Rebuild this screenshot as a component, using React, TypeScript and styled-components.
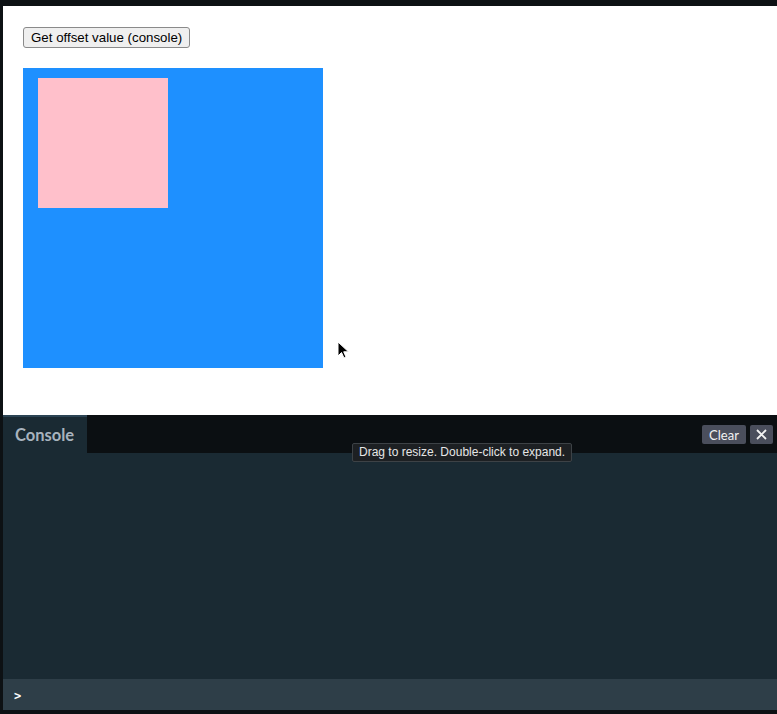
import React from "react";
import styled, { createGlobalStyle } from "styled-components";

const Global = createGlobalStyle`
  html, body { margin: 0; padding: 0; background: #0d1114; }
  body { width: 777px; height: 714px; overflow: hidden; }
`;

const Frame = styled.div`
  position: relative;
  width: 777px;
  height: 714px;
  box-sizing: border-box;
  padding: 6px 0 4px 3px;
  display: flex;
  flex-direction: column;
  background: #0d1114;
`;

const Preview = styled.div`
  height: 409px;
  flex: none;
  background: #ffffff;
  box-sizing: border-box;
  padding: 21px 20px 0 20px;
  display: flex;
  flex-direction: column;
  align-items: flex-start;
  gap: 20px;
`;

const NativeButton = styled.button`
  font-family: "Liberation Sans", Arial, sans-serif;
  font-size: 13.3px;
  height: 21px;
  padding: 1px 7px;
  border: 1px solid #8a8a8a;
  border-radius: 3px;
  background: #efefef;
  color: #000;
  line-height: 17px;
`;

const BlueBox = styled.div`
  width: 300px;
  height: 300px;
  background: #1e90ff;
  box-sizing: border-box;
  padding: 10px 0 0 15px;
`;

const PinkBox = styled.div`
  width: 130px;
  height: 130px;
  background: #ffc0cb;
`;

const Console = styled.div`
  flex: 1;
  display: flex;
  flex-direction: column;
  background: #1a2a33;
  position: relative;
`;

const Header = styled.div`
  height: 38px;
  flex: none;
  background: #0b0f12;
  display: flex;
  align-items: stretch;
`;

const Tab = styled.div`
  width: 84px;
  box-sizing: border-box;
  background: #1a2a33;
  border-top: 2px solid #2c4454;
  padding-left: 12px;
  display: flex;
  align-items: center;
  font-family: Lato, "Open Sans", sans-serif;
  font-weight: 700;
  font-size: 16.5px;
  color: #a8b3be;
`;

const Spacer = styled.div`
  flex: 1;
`;

const Actions = styled.div`
  display: flex;
  gap: 4px;
  padding: 10px 4px 0 0;
  align-items: flex-start;
`;

const HeadButton = styled.button<{ $square?: boolean }>`
  height: 19px;
  min-width: ${(p) => (p.$square ? "23px" : "44px")};
  padding: 0 ${(p) => (p.$square ? "0" : "6px")};
  border: none;
  border-radius: 2px;
  background: #4a4e5c;
  color: #f2f2f2;
  font-family: Lato, "Open Sans", sans-serif;
  font-size: 13px;
  display: flex;
  align-items: center;
  justify-content: center;
`;

const Body = styled.div`
  flex: 1;
  background: #1a2a33;
`;

const InputBar = styled.div`
  height: 31px;
  flex: none;
  background: #2e3e48;
  display: flex;
  align-items: center;
  padding-left: 11px;
  padding-top: 2px;
  box-sizing: border-box;
  font-family: "DejaVu Sans Mono", monospace;
  font-weight: 700;
  font-size: 12px;
  color: #ffffff;
`;

const Tooltip = styled.div`
  position: absolute;
  left: 349px;
  top: 28px;
  height: 19px;
  box-sizing: border-box;
  padding: 0 6px;
  background: #1d2023;
  border: 1px solid #3d4246;
  border-radius: 2px;
  color: #e6e6e6;
  font-family: "Liberation Sans", Arial, sans-serif;
  font-size: 12px;
  line-height: 17px;
  white-space: nowrap;
`;

const Cursor = styled.svg`
  position: absolute;
  left: 337px;
  top: 341px;
`;

export default function App() {
  return (
    <>
      <Global />
      <Frame>
        <Preview>
          <NativeButton>Get offset value (console)</NativeButton>
          <BlueBox>
            <PinkBox />
          </BlueBox>
        </Preview>
        <Console>
          <Header>
            <Tab>Console</Tab>
            <Spacer />
            <Actions>
              <HeadButton>Clear</HeadButton>
              <HeadButton $square>
                <svg width="11" height="11" viewBox="0 0 11 11">
                  <path d="M1 1 L10 10 M10 1 L1 10" stroke="#f2f2f2" strokeWidth="1.8" />
                </svg>
              </HeadButton>
            </Actions>
          </Header>
          <Body />
          <InputBar>&gt;</InputBar>
          <Tooltip>Drag to resize. Double-click to expand.</Tooltip>
        </Console>
        <Cursor width="14" height="20" viewBox="0 0 14 20">
          <path d="M1 1 L1 15 L4.5 11.5 L7 17 L9 16 L6.7 10.8 L11.5 10.8 Z" fill="#000" stroke="#fff" strokeWidth="1" />
        </Cursor>
      </Frame>
    </>
  );
}
